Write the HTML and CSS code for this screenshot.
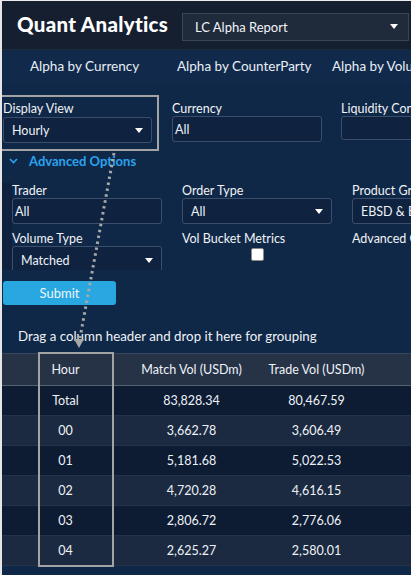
FILE: index.html
```html
<!DOCTYPE html>
<html>
<head>
<meta charset="utf-8">
<link rel="stylesheet" href="styles.css">
</head>
<body>
<div class="frame">
  <header class="topbar">
    <div class="brand">Quant Analytics</div>
    <div class="report-select"><span>LC Alpha Report</span><span class="caret"></span></div>
  </header>
  <nav class="tabs">
    <span class="tab t1">Alpha by Currency</span>
    <span class="tab t2">Alpha by CounterParty</span>
    <span class="tab t3">Alpha by Volume</span>
  </nav>
  <main class="content">
    <div class="row1">
      <div class="field hl">
        <div class="lbl">Display View</div>
        <div class="ctl sel"><span>Hourly</span><span class="caret"></span></div>
      </div>
      <div class="field f-cur">
        <div class="lbl">Currency</div>
        <div class="ctl inp">All</div>
      </div>
      <div class="field f-liq">
        <div class="lbl">Liquidity Constraint</div>
        <div class="ctl inp short"></div>
      </div>
    </div>
    <div class="adv-toggle"><span class="chev"><svg width="9" height="6" viewBox="0 0 9 6"><path d="M1 1 L4.5 4.5 L8 1" fill="none" stroke="#2aa3ef" stroke-width="1.6"/></svg></span><span class="adv-text">Advanced Options</span></div>
    <div class="adv-panel">
      <div class="adv-row">
        <div class="field w150">
          <div class="lbl">Trader</div>
          <div class="ctl inp">All</div>
        </div>
        <div class="field w150">
          <div class="lbl">Order Type</div>
          <div class="ctl sel"><span>All</span><span class="caret"></span></div>
        </div>
        <div class="field w150">
          <div class="lbl">Product Group</div>
          <div class="ctl sel"><span>EBSD &amp; EBS Market</span></div>
        </div>
      </div>
      <div class="adv-row r2">
        <div class="field w150">
          <div class="lbl">Volume Type</div>
          <div class="ctl sel tall"><span>Matched</span><span class="caret"></span></div>
        </div>
        <div class="field w150">
          <div class="lbl">Vol Bucket Metrics</div>
          <div class="chk-wrap"><span class="chk"></span></div>
        </div>
        <div class="field w150">
          <div class="lbl">Advanced Options</div>
        </div>
      </div>
    </div>
    <div class="submit-row"><button class="submit">Submit</button></div>
    <div class="group-hint">Drag a column header and drop it here for grouping</div>
    <div class="grid">
      <div class="grow head"><span>Hour</span><span>Match Vol (USDm)</span><span>Trade Vol (USDm)</span></div>
      <div class="grow odd"><span>Total</span><span>83,828.34</span><span>80,467.59</span></div>
      <div class="grow even"><span>00</span><span>3,662.78</span><span>3,606.49</span></div>
      <div class="grow odd"><span>01</span><span>5,181.68</span><span>5,022.53</span></div>
      <div class="grow even"><span>02</span><span>4,720.28</span><span>4,616.15</span></div>
      <div class="grow odd"><span>03</span><span>2,806.72</span><span>2,776.06</span></div>
      <div class="grow even"><span>04</span><span>2,625.27</span><span>2,580.01</span></div>
    </div>
  </main>
  <div class="col-hl"></div>
  <svg class="arrow" width="411" height="575" viewBox="0 0 411 575">
    <line x1="114" y1="153" x2="80" y2="338" stroke="#a8a8a8" stroke-width="3" stroke-dasharray="2.5 3.5"/>
    <path d="M74 339 L84 339 L79 348 Z" fill="#a8a8a8"/>
  </svg>
</div>
</body>
</html>
```
FILE: styles.css
```css
* { box-sizing: border-box; }
html, body { margin: 0; padding: 0; background: #0d1b31; }
body { font-family: "Lato", "Noto Sans", sans-serif; color: #eef2f7; }
.frame {
  position: relative;
  width: 411px;
  height: 575px;
  overflow: hidden;
  border-left: 2px solid #e6e6e6;
  border-top: 1px solid #ececec;
  background: #102848;
}
.topbar {
  height: 49px;
  background: #151f30;
  display: flex;
  align-items: center;
  padding-left: 15px;
  border-bottom: 1px solid #1c2a3e;
}
.brand {
  font-family: "Lato", "Noto Sans", sans-serif;
  font-weight: 900;
  font-size: 20.5px;
  letter-spacing: 0.3px;
  color: #ffffff;
  width: 165px;
  flex: none;
  margin-top: -2px;
}
.report-select {
  flex: none;
  width: 227px;
  height: 28px;
  margin-top: 3px;
  background: #1f2a3b;
  border: 1px solid #384457;
  display: flex;
  align-items: center;
  justify-content: space-between;
  padding: 0 10px 0 12px;
  font-size: 13px;
  color: #f2f4f7;
}
.caret {
  flex: none;
  width: 0; height: 0;
  border-left: 4.5px solid transparent;
  border-right: 4.5px solid transparent;
  border-top: 5px solid #ffffff;
}
.tabs {
  height: 34px;
  background: #112a4b;
  display: flex;
  align-items: center;
  font-size: 13.5px;
  color: #e9eef5;
  white-space: nowrap;
  padding-bottom: 2px;
}
.tab { flex: none; }
.tab.t1 { margin-left: 28px; width: 147px; }
.tab.t2 { width: 155px; }
.content { padding-top: 11px; }
.row1 { display: flex; align-items: flex-start; height: 56px; }
.field { display: flex; flex-direction: column; flex: none; }
.lbl { font-size: 12.5px; color: #f1f3f6; line-height: 15px; height: 15px; white-space: nowrap; }
.ctl {
  height: 26px;
  border: 1px solid #3b4f6c;
  border-radius: 3px;
  background: #0f2240;
  font-size: 12.5px;
  display: flex;
  align-items: center;
  white-space: nowrap;
  overflow: hidden;
}
.hl {
  width: 159px;
  height: 56px;
  border: 2px solid #a3a3a3;
  padding: 4px 5px 0 1px;
  margin-left: -2px;
}
.hl .lbl { margin-bottom: 1px; }
.sel { justify-content: space-between; padding: 0 8px 0 8px; }
.inp { padding-left: 2px; }
.f-cur { margin-left: 13px; width: 150px; padding-top: 6px; }
.f-liq { margin-left: 19px; width: 100px; padding-top: 6px; }
.short { height: 24px; width: 100px; }
.adv-toggle {
  display: flex;
  align-items: center;
  height: 20px;
  padding-left: 7px;
}
.chev { display: flex; width: 20px; }
.adv-text { color: #2aa3ef; font-weight: 700; font-size: 13px; }
.adv-panel {
  height: 87px;
  overflow: hidden;
  padding-left: 10px;
  margin-top: 12px;
  background: linear-gradient(to right, #0e2240 0, #0e2240 10px, #102848 10px);
}
.adv-row { display: flex; gap: 20px; }
.w150 { width: 150px; }
.r2 { margin-top: 7px; }
.tall { height: 28px; }
.chk-wrap { padding-left: 69px; padding-top: 2px; }
.chk {
  display: block;
  width: 13px; height: 13px;
  background: #ffffff;
  border-radius: 2px;
  border: 1px solid #8a8a8a;
}
.submit-row { padding: 11px 0 0 1px; height: 35px; }
.submit {
  display: block;
  width: 113px;
  height: 24px;
  background: #29a7e1;
  border: none;
  border-radius: 3px;
  color: #eaf6fc;
  font-family: "Lato", sans-serif;
  font-size: 13px;
  padding: 0;
}
.group-hint {
  font-size: 13.3px;
  padding: 22px 0 0 16px;
  line-height: 18px;
  height: 48px;
  color: #eef2f7;
}
.grid { border-top: 1px solid #36465c; }
.grow {
  display: grid;
  grid-template-columns: 127px 125px 125px 1fr;
  height: 30px;
  align-items: center;
  font-size: 12.5px;
  border-bottom: 1px solid #22334a;
}
.grow span { text-align: center; }
.grow.head { height: 32px; background: #263347; border-bottom: 1px solid #56626f; }
.grow.odd { background: #0d1c33; }
.grow.even { background: #1b2a40; }
.col-hl {
  position: absolute;
  left: 36px;
  top: 351px;
  width: 76px;
  height: 215px;
  border: 2px solid #a3a3a3;
}
.arrow { position: absolute; left: -2px; top: -1px; pointer-events: none; }
```
